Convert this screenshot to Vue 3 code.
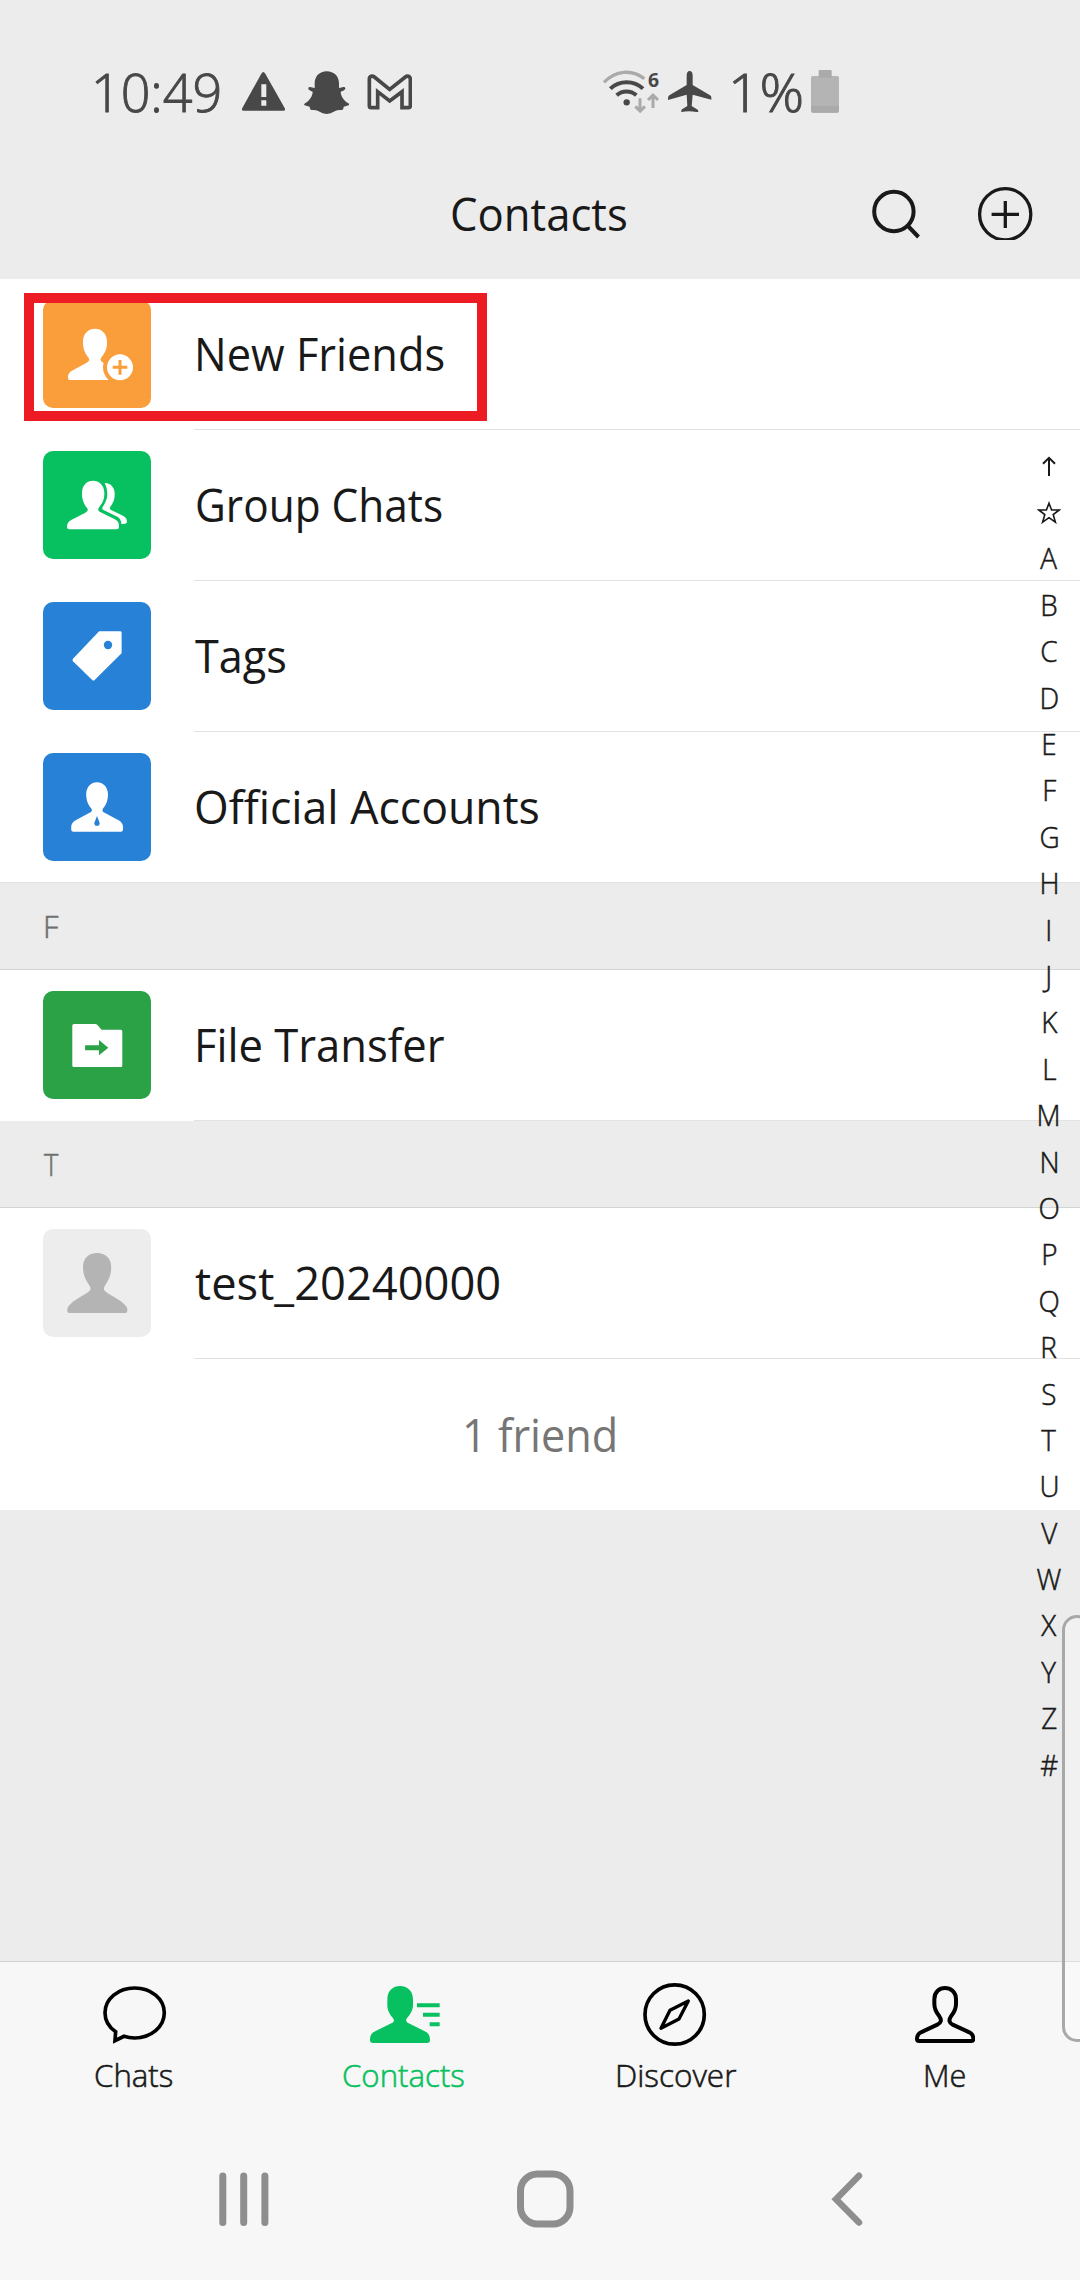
<script setup>
// Condenses a label so that its visible glyphs span exactly the given width.
const canvas = document.createElement('canvas')
const vInk = {
  mounted(el, { value }) {
    const cs = getComputedStyle(el)
    const ctx = canvas.getContext('2d')
    ctx.font = `${cs.fontWeight} ${cs.fontSize} ${cs.fontFamily}`
    const m = ctx.measureText(el.textContent)
    const left = -m.actualBoundingBoxLeft
    const scale = value / (m.actualBoundingBoxRight - left)
    const natural = el.getBoundingClientRect().width
    el.style.transform = `scaleX(${scale})`
    el.style.marginLeft = `${-left * scale}px`
    el.style.marginRight = `${value - natural + left * scale}px`
  }
}

const shortcuts = [
  { label: 'New Friends', icon: 'new', color: '#fa9d3b', width: 245.5, left: 46.6 },
  { label: 'Group Chats', icon: 'group', color: '#07c160', width: 244.5, left: 45.7 },
  { label: 'Tags', icon: 'tag', color: '#2782d7', width: 90, left: 44.4 },
  { label: 'Official Accounts', icon: 'official', color: '#2782d7', width: 342, left: 45 }
]
const sections = [
  { letter: 'F', inset: 46, w: 12.5, row: { label: 'File Transfer', icon: 'file', color: '#2ba245', width: 247, left: 46.5 } },
  { letter: 'T', inset: 44, w: 14.5, row: { label: 'test_20240000', icon: 'avatar', color: '#ededed', width: 304, left: 43.8 } }
]
const groups = [
  { rows: shortcuts },
  ...sections.map((s) => ({ letter: s.letter, inset: s.inset, w: s.w, rows: [s.row] }))
]
const letters = 'ABCDEFGHIJKLMNOPQRSTUVWXYZ#'.split('')
const tabs = [
  { label: 'Chats', width: 77.5, shift: -2 },
  { label: 'Contacts', width: 121, shift: -2.6, active: true },
  { label: 'Discover', width: 118, shift: 3 },
  { label: 'Me', width: 39, shift: 0.6 }
]
</script>

<template>
  <div class="screen">
    <div class="status">
      <span v-ink="123" class="time">10:49</span>
      <svg class="warn" viewBox="485 67 130 117" width="43.3" height="39">
        <path d="M549 67q3 0 6 5l58 103q4 8-4 8H490q-8 0-4-8l57-103q3-5 6-5Z" fill="#484848" />
        <path d="M543 104h15v38h-15zM543 152h15v16h-15z" fill="#ececec" />
      </svg>
      <svg class="snap" viewBox="671 65 137 130" width="45.7" height="43.3">
        <path d="M739 66c22 0 37 15 37 36v14l14-3q6 0 5 5-1 4-14 9c0 12 9 26 23 35q5 4 1 6l-15 4q-1 10-6 10-13-1-21 4-12 8-24 8t-24-8q-8-5-21-4-5 0-6-10l-15-4q-4-2 1-6c14-9 23-23 23-35q-12-5-13-9-1-5 5-5l14 3v-14c0-21 15-36 36-36Z" fill="#484848" />
      </svg>
      <svg class="gmail" viewBox="860 71 137 108" width="45.7" height="36">
        <path d="M867 87c0-10 9-12 15-7l46 37 47-37c6-5 15-3 15 7v79q0 6-6 6h-19v-48l-37 28-36-28v48h-19q-6 0-6-6Z" fill="none" stroke="#484848" stroke-width="11" />
      </svg>
      <svg class="wifi" viewBox="64 58 174 132" width="58" height="44" fill="none">
        <path d="M70 95C104 60 153 54 191 84" stroke="#aaa" stroke-width="10" />
        <path d="M89 114c27-26 71-26 98 0M108 134c17-15 42-15 59 0" stroke="#484848" stroke-width="12" />
        <circle cx="138" cy="155" r="9.5" fill="#484848" />
        <path d="M178 143v37M164 167l14.500 14.500L193 167M217 172v-37M202 148l15-14.500L232 148" stroke="#aaa" stroke-width="9" />
        <text x="202" y="110" class="six" fill="#484848">6</text>
      </svg>
      <svg class="plane" viewBox="262 63 131 125" width="43.7" height="41.7">
        <path d="M327 63c6 0 9 5 9 15v27l52 31q4 3 4 7v6l-56-15-3 34 18 11q3 3 1 8-25-6-50-1-1-5 2-8l16-10-2-34-56 16v-6q0-5 4-8l52-31V78c0-10 3-15 9-15Z" fill="#484848" />
      </svg>
      <span v-ink="68" class="pct">1%</span>
      <svg class="battery" viewBox="693 60 84 129" width="28" height="43">
        <rect x="716" y="60" width="39" height="26" rx="4" fill="#aaa" />
        <rect x="693" y="78" width="84" height="110" rx="6" fill="#b4b4b4" />
        <path d="M716 78h39v5h-39zM693 167h84v15q0 6-6 6h-72q-6 0-6-6Z" fill="#aaa" />
      </svg>
    </div>

    <header class="header">
      <span v-ink="174" class="title">Contacts</span>
      <svg class="search" width="50" height="52" viewBox="871 188 50 52" fill="none" stroke="#191919" stroke-width="4">
        <circle cx="893.900" cy="211.500" r="19.700" /><path d="M907.500 225.500 918.500 237" />
      </svg>
      <svg class="add" width="56" height="53" viewBox="977 187 56 53" fill="none" stroke="#191919" stroke-width="3.300">
        <circle cx="1005.200" cy="214.300" r="25.600" /><path d="M991.600 214.300h27.400M1005.300 201v27" />
      </svg>
    </header>

    <main class="list">
      <section v-for="(g, gi) in groups" :key="gi" :class="{ shortcuts: gi === 0 }">
        <div v-if="g.letter" class="section-head" :style="{ paddingLeft: g.inset + 'px' }">
          <span v-ink="g.w">{{ g.letter }}</span>
        </div>
        <div v-for="r in g.rows" :key="r.label" class="row">
          <div class="tile" :style="{ background: r.color }">
            <svg v-if="r.icon === 'new'" viewBox="129 60 324 324" fill="#fff">
              <path d="M249 185C249 160 265 146 285 146S321 160 321 185V190C321 208 313 222 305 231Q299 238 304 244L311 249 350 268V300H210Q204 300 204 294C204 282 208 276 220 270L260 248Q272 241 266 234C257 224 249 208 249 190Z" />
              <circle cx="360" cy="262" r="51" fill="#fa9d3b" /><circle cx="360" cy="262" r="39" />
              <path d="M338 262h44M360 240v44" stroke="#fa9d3b" stroke-width="9" />
            </svg>
            <svg v-else-if="r.icon === 'group'" viewBox="129 513 324 324" fill="#fff">
              <path d="M246 638C246 616 261 602 279 602S313 616 313 638V643C313 660 305 673 298 681Q291 690 299 695L343 717C353 722 357 728 357 737V741Q357 748 350 748H208Q201 748 201 741C201 729 206 723 215 719L256 698Q268 692 261 684C253 675 246 660 246 643Z" />
              <path d="M314 609C335 610 344 625 344 640V645C344 662 336 674 330 682Q328 686 332 689L370 708C380 714 382 720 380 729Q375 733 364 732C364 722 360 714 352 710L312 691Q304 688 308 681C316 670 322 655 322 645C322 630 319 618 314 609Z" />
            </svg>
            <svg v-else-if="r.icon === 'tag'" viewBox="0 0 108 108">
              <path d="M56.400 29.300H77.200Q78.600 29.300 78.600 30.700V51.300L51.600 78Q50.400 79 49.200 78L30 59.200Q29 58 30 56.800L55.400 30Z" fill="#fff" />
              <circle cx="65" cy="43" r="4.200" fill="#2782d7" />
            </svg>
            <svg v-else-if="r.icon === 'official'" viewBox="0 0 108 108">
              <path d="M43.200 41.500C43.200 34 48 29.300 54 29.300S65 34 65 41.500C65 48 62.500 53 59.800 55.700Q58.700 57.500 60.200 59L76 67.500Q80 70 80 74V76.500Q80 78.700 77.800 78.700H30.400Q28.200 78.700 28.200 76.500V74Q28.200 70 32.200 67.500L48 59Q49.700 57.500 48.500 55.700C45.800 53 43.200 48 43.200 41.500Z" fill="#fff" />
              <path d="M54 63q1.500 4 2.700 7 .3 1.200-1.200 2.700h-3q-1.500-1.500-1.200-2.700Z" fill="#2782d7" />
            </svg>
            <svg v-else-if="r.icon === 'file'" viewBox="0 0 108 108">
              <path d="M31 33H52.500Q53.500 33 54.200 33.800L58.600 38.700H77.800Q79.300 38.700 79.300 40.200V74.500Q79.300 76 77.800 76H30.800Q29.300 76 29.300 74.500V34.500Q29.300 33 31 33Z" fill="#fff" />
              <path d="M42.100 54.300H56V49L65.300 56.700 56 64.300V59.300H42.100Z" fill="#2ba245" />
            </svg>
            <svg v-else viewBox="0 0 108 108">
              <path d="M40 38C40 29 46 24 54 24S68.200 29 68.200 38C68.200 48 64.500 52 61.500 57.500Q60.300 60 61.500 61.500C65 65.500 75 69 81 75Q84.300 78 84.300 80V82Q84.300 84 82.300 84H26.300Q24.300 84 24.300 82V80Q24.300 78 27.600 75C33.500 69 43 65.500 47 61.500Q48 60 47 57.500C44 52 40 48 40 38Z" fill="#b4b4b4" />
            </svg>
          </div>
          <div class="cell">
            <span v-ink="r.width" :style="{ left: (r.left - 43) + 'px' }" class="label">{{ r.label }}</span>
          </div>
        </div>
      </section>
      <div class="count"><span v-ink="149.5">1 friend</span></div>
    </main>

    <footer class="bottom">
      <nav class="tabs">
        <div v-for="t in tabs" :key="t.label" class="tab" :class="{ active: t.active }">
          <div class="tab-icon">
            <svg v-if="t.label === 'Chats'" viewBox="129 129 190 189" width="63.300" height="63">
              <path d="M192 289Q207 294 224 294C273 294 313 260 313 218S273 144 224 144 135 176 135 218C135 242 148 262 167 275L165 302Z" fill="none" stroke="#000" stroke-width="11" />
            </svg>
            <svg v-else-if="t.label === 'Contacts'" viewBox="930 129 210 189" width="70" height="63" fill="#07c160">
              <path d="M982 178C982 152 999 138 1020 138S1059 152 1059 178V195C1059 212 1050 224 1042 233 1036 240 1038 247 1046 250L1093 273C1106 279 1110 288 1110 300Q1110 309 1101 309H939Q930 309 930 300C930 288 933 279 947 273L994 250C1003 247 1004 240 998 233 990 224 982 212 982 195Z" />
              <path d="M1071 190h68v12h-68zM1089 218h50v12h-50zM1109 247h30v12h-30z" />
            </svg>
            <svg v-else-if="t.label === 'Discover'" viewBox="189 129 190 189" width="63.300" height="63" fill="none" stroke="#000" stroke-width="11">
              <circle cx="284" cy="223.500" r="89" />
              <path d="M325 183 270 211 243 265 297 237Z" stroke-linejoin="round" stroke-width="10" />
            </svg>
            <svg v-else viewBox="1004 129 182 189" width="60.700" height="63">
              <path d="M1062 178C1062 155 1078 144 1094 144S1127 155 1127 178V192C1127 208 1120 219 1112 229 1104 240 1107 249 1117 254L1167 277C1177 282 1179 288 1179 297Q1179 303 1173 303H1016Q1010 303 1010 297C1010 288 1012 282 1022 277L1071 254C1082 249 1085 240 1077 229 1069 219 1062 208 1062 192Z" fill="none" stroke="#000" stroke-width="12" />
            </svg>
          </div>
          <div class="tab-label" :style="{ paddingLeft: Math.max(0, t.shift) + 'px', paddingRight: Math.max(0, -t.shift) + 'px' }">
            <span v-ink="t.width">{{ t.label }}</span>
          </div>
        </div>
      </nav>
      <div class="navbar">
        <svg width="50" height="56" viewBox="0 0 50 56" stroke="#8e8e8e" stroke-width="7" stroke-linecap="round">
          <path d="M3.800 5v46.500M24.700 5v46.500M45.900 5v46.500" />
        </svg>
        <svg class="home" width="57" height="58" viewBox="0 0 57 58"><rect x="3.500" y="4" width="49.500" height="50" rx="17" fill="none" stroke="#8e8e8e" stroke-width="7" /></svg>
        <svg class="back" width="32" height="56" viewBox="0 0 32 56" fill="none" stroke="#8e8e8e" stroke-width="6.500" stroke-linecap="round"><path d="M28 4.800 5 28.200 28 51.500" /></svg>
      </div>
    </footer>

    <aside class="index">
      <div><svg width="14" height="20" viewBox="0 0 14 20" fill="none" stroke="#191919" stroke-width="2"><path d="M7 20V2M1 7.800 7 1.800 13 7.800" /></svg></div>
      <div><svg width="24" height="23" viewBox="0 0 24 23" fill="none" stroke="#191919" stroke-width="1.600"><path d="M12 2.200 14.600 9H22.200L16.200 13.500 18.400 21.200 12 16.700 5.600 21.200 7.800 13.500 1.800 9H9.400Z" /></svg></div>
      <div v-for="l in letters" :key="l"><span>{{ l }}</span></div>
    </aside>
    <div class="edge-handle"></div>
    <div class="highlight"></div>
  </div>
</template>

<style>
body {
  margin: 0;
}
</style>

<style scoped>
.screen {
  position: relative;
  width: 1080px;
  height: 2280px;
  overflow: hidden;
  display: flex;
  flex-direction: column;
  background: #ececec;
  color: #191919;
  font-family: "Open Sans", "Noto Sans", sans-serif;
  font-weight: 400;
  font-variant-ligatures: none;
}
.screen * {
  box-sizing: border-box;
}
.screen span {
  display: inline-block;
  white-space: nowrap;
  transform-origin: left center;
}
/* Weight between Light and Regular for the thinner labels */
.status span,
.section-head span,
.tab-label span,
.index span {
  font-weight: 300;
  -webkit-text-stroke: 0.018em currentColor;
}
svg {
  display: block;
  flex: none;
}
.status {
  display: flex;
  align-items: center;
  height: 148px;
  padding: 35px 0 0 95.500px;
  color: #484848;
  font-size: 53px;
  line-height: 72px;
}
.warn { margin-left: 23.200px; }
.snap { margin-left: 18.500px; margin-top: 3px; }
.gmail { margin-left: 17.500px; }
.wifi { margin-left: 189.500px; overflow: visible; }
.plane { margin-left: 8px; }
.pct { flex: none; }
.plane + .pct { position: relative; left: 22px; }
.battery { margin-left: 31.500px; }
.six {
  font: 700 58px "Open Sans", "Noto Sans", sans-serif;
}
.header {
  display: flex;
  align-items: center;
  height: 131px;
  padding-left: 452px;
}
.title {
  font-size: 46px;
  line-height: 63px;
}
.search { margin-left: 245px; }
.add { margin-left: 56px; }
.list {
  flex: none;
}
.row {
  display: flex;
  height: 151px;
  padding-left: 43px;
  background: #fff;
}
.shortcuts .row:last-child {
  border-bottom: 1px solid #e2e2e2;
}
.shortcuts .row:last-child .cell {
  border-bottom: 0;
}
.tile {
  width: 108px;
  height: 108px;
  margin: 21px 43px 0 0;
  border-radius: 10px;
}
.cell {
  flex: 1;
  border-bottom: 1px solid #e2e2e2;
  font-size: 46px;
  line-height: 149px;
}
.label {
  position: relative;
}
.section-head {
  height: 87px;
  border-bottom: 1px solid #d4d4d4;
  background: #ececec;
  color: #707070;
  font-size: 32px;
  line-height: 86px;
}
.count {
  height: 151px;
  padding-left: 2px;
  background: #fff;
  color: #767676;
  font-size: 46px;
  line-height: 150px;
  text-align: center;
}
.bottom {
  margin-top: auto;
  height: 319px;
  border-top: 1px solid #d2d2d2;
  background: #f7f7f7;
}
.tabs {
  display: flex;
  height: 156px;
}
.tab {
  flex: 1;
  padding-top: 21px;
}
.tab-icon {
  display: flex;
  justify-content: center;
  height: 63px;
}
.tab-label {
  display: flex;
  justify-content: center;
  margin-top: 9px;
  font-size: 32px;
  line-height: 40px;
}
.active {
  color: #07c160;
}
.navbar {
  display: flex;
  align-items: center;
  height: 162px;
  padding-left: 218.700px;
}
.home { margin-left: 248.500px; }
.back { margin-left: 257px; }
.index {
  position: absolute;
  left: 1029px;
  top: 442.500px;
  width: 40px;
}
.index div {
  display: flex;
  align-items: center;
  justify-content: center;
  height: 46.400px;
  font-size: 29px;
  line-height: 44px;
}
.index .screen span,
.index div span {
  transform: scaleX(0.96);
  transform-origin: center;
}
.edge-handle {
  position: absolute;
  left: 1062px;
  top: 1615px;
  width: 30px;
  height: 427px;
  border: 3px solid #a8a8a8;
  border-radius: 18px;
  background: rgba(255, 255, 255, 0.25);
}
.highlight {
  position: absolute;
  left: 24px;
  top: 293px;
  width: 463px;
  height: 128px;
  border: 10px solid #ed1c24;
}
</style>
